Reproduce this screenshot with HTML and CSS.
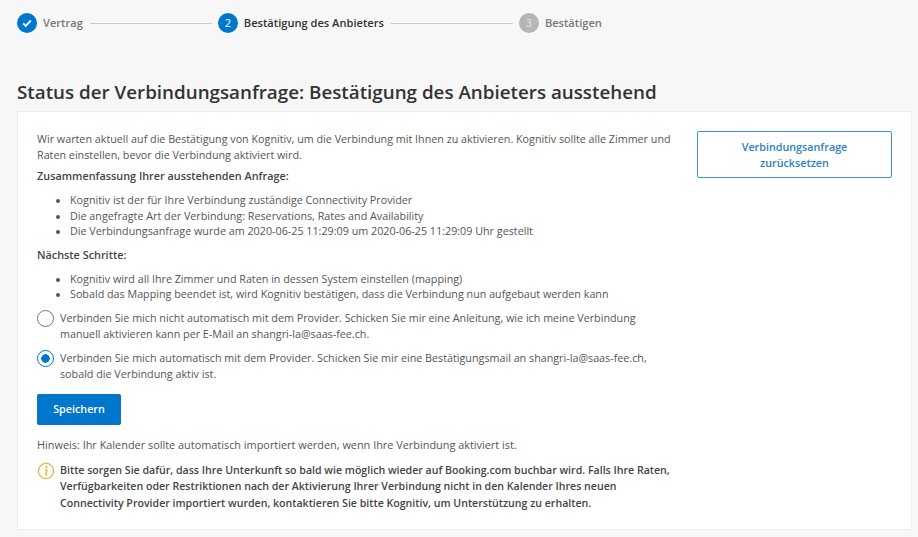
FILE: index.html
```html
<!DOCTYPE html>
<html lang="de">
<head>
  <meta charset="UTF-8" />
  <title>Status der Verbindungsanfrage</title>
  <link rel="stylesheet" href="styles.css">
</head>
<body>
  <ol class="steps">
    <li class="step done">
      <span class="dot">
        <svg width="12" height="12" viewBox="0 0 12 12"><path d="M2.2 6.3l2.6 2.6 5-5.4" fill="none" stroke="#fff" stroke-width="1.9"/></svg>
      </span>
      <span class="step-label">Vertrag</span>
    </li>
    <li class="line"></li>
    <li class="step current">
      <span class="dot">2</span>
      <span class="step-label">Bestätigung des Anbieters</span>
    </li>
    <li class="line"></li>
    <li class="step todo">
      <span class="dot">3</span>
      <span class="step-label">Bestätigen</span>
    </li>
  </ol>

  <h1>Status der Verbindungsanfrage: Bestätigung des Anbieters ausstehend</h1>

  <div class="card">
    <div class="main">
      <p class="intro">Wir warten aktuell auf die Bestätigung von Kognitiv, um die Verbindung mit Ihnen zu aktivieren. Kognitiv sollte alle Zimmer und Raten einstellen, bevor die Verbindung aktiviert wird.</p>
      <p class="heading">Zusammenfassung Ihrer ausstehenden Anfrage:</p>
      <ul>
        <li>Kognitiv ist der für Ihre Verbindung zuständige Connectivity Provider</li>
        <li>Die angefragte Art der Verbindung: Reservations, Rates and Availability</li>
        <li>Die Verbindungsanfrage wurde am 2020-06-25 11:29:09 um 2020-06-25 11:29:09 Uhr gestellt</li>
      </ul>
      <p class="heading">Nächste Schritte:</p>
      <ul>
        <li>Kognitiv wird all Ihre Zimmer und Raten in dessen System einstellen (mapping)</li>
        <li>Sobald das Mapping beendet ist, wird Kognitiv bestätigen, dass die Verbindung nun aufgebaut werden kann</li>
      </ul>
      <label class="option">
        <span class="radio"></span>
        <span>Verbinden Sie mich nicht automatisch mit dem Provider. Schicken Sie mir eine Anleitung, wie ich meine Verbindung manuell aktivieren kann per E-Mail an shangri-la@saas-fee.ch.</span>
      </label>
      <label class="option">
        <span class="radio checked"></span>
        <span>Verbinden Sie mich automatisch mit dem Provider. Schicken Sie mir eine Bestätigungsmail an shangri-la@saas-fee.ch, sobald die Verbindung aktiv ist.</span>
      </label>
      <button class="save">Speichern</button>
      <p class="hint">Hinweis: Ihr Kalender sollte automatisch importiert werden, wenn Ihre Verbindung aktiviert ist.</p>
      <div class="notice">
        <svg class="info" width="18" height="18" viewBox="0 0 18 18">
          <circle cx="9" cy="9" r="7.6" fill="none" stroke="#e8b53c" stroke-width="1.3"/>
          <circle cx="9.4" cy="5.2" r="1.1" fill="#e8b53c"/>
          <path d="M7.6 7.9h2.3l-1 5h1.3" fill="none" stroke="#e8b53c" stroke-width="1.4"/>
        </svg>
        <p>Bitte sorgen Sie dafür, dass Ihre Unterkunft so bald wie möglich wieder auf Booking.com buchbar wird. Falls Ihre Raten, Verfügbarkeiten oder Restriktionen nach der Aktivierung Ihrer Verbindung nicht in den Kalender Ihres neuen Connectivity Provider importiert wurden, kontaktieren Sie bitte Kognitiv, um Unterstützung zu erhalten.</p>
      </div>
    </div>
    <button class="reset">Verbindungsanfrage zurücksetzen</button>
  </div>
</body>
</html>
```

FILE: styles.css
```css
body {
  margin: 0;
  height: 537px;
  overflow: hidden;
  padding: 0 0 0 17px;
  font-family: "Open Sans", sans-serif;
  font-size: 10.75px;
  line-height: 16px;
  color: #555;
  background: #f7f7f7;
}
.steps {
  display: flex;
  align-items: center;
  list-style: none;
  margin: 0;
  padding: 14px 0 0;
  height: 18px;
  font-size: 11.1px;
}
.step {
  display: flex;
  align-items: center;
  gap: 6px;
  font-weight: 600;
  color: #777;
}
.dot {
  display: flex;
  align-items: center;
  justify-content: center;
  width: 20px;
  height: 20px;
  border-radius: 50%;
  color: #cfe3f5;
  background: #0077cc;
}
.todo .dot {
  color: #ddd;
  background: #b5b5b5;
}
.current .step-label {
  color: #333;
}
.line {
  width: 122px;
  height: 1px;
  margin: 0 6px 0 7px;
  background: #c9c9c9;
}
h1 {
  margin: 48px 0 7px;
  font-size: 18.8px;
  line-height: 24px;
  font-weight: 600;
  color: #333;
}
.card {
  display: flex;
  gap: 26px;
  width: 895px;
  height: 419px;
  box-sizing: border-box;
  padding: 19px 0 0 19px;
  background: #fff;
  border: 1px solid #ececec;
}
.main {
  width: 634px;
  flex: none;
}
p {
  margin: 0;
}
.intro {
  margin-bottom: 1px;
}
.heading {
  margin-top: 5px;
  font-size: 10.85px;
  font-weight: 600;
  color: #444;
}
ul {
  margin: 9px 0 7px;
  padding-left: 33px;
  line-height: 15.5px;
}
.option {
  display: flex;
  gap: 6px;
  margin-bottom: 8px;
}
.radio {
  flex: none;
  box-sizing: border-box;
  width: 17px;
  height: 17px;
  border: 1.5px solid #777;
  border-radius: 50%;
}
.radio.checked {
  border-color: #0077cc;
  background: radial-gradient(circle, #0077cc 0 4px, #fff 4.5px);
}
.save {
  display: block;
  width: 84px;
  height: 31px;
  margin: 12px 0 12px;
  padding: 0;
  font: 600 10.75px "Open Sans", sans-serif;
  color: #fff;
  background: #0077cc;
  border: none;
  border-radius: 2px;
}
.hint {
  font-size: 10.9px;
}
.notice {
  display: flex;
  gap: 5px;
  margin-top: 9px;
  font-size: 10.6px;
  line-height: 16.5px;
  font-weight: 600;
  color: #444;
}
.info {
  flex: none;
}
.reset {
  flex: none;
  width: 195px;
  height: 47px;
  padding: 0 30px;
  font: 600 10.75px/16px "Open Sans", sans-serif;
  color: #2b80c9;
  background: #fff;
  border: 1px solid #3d96c8;
  border-radius: 2px;
}
```
